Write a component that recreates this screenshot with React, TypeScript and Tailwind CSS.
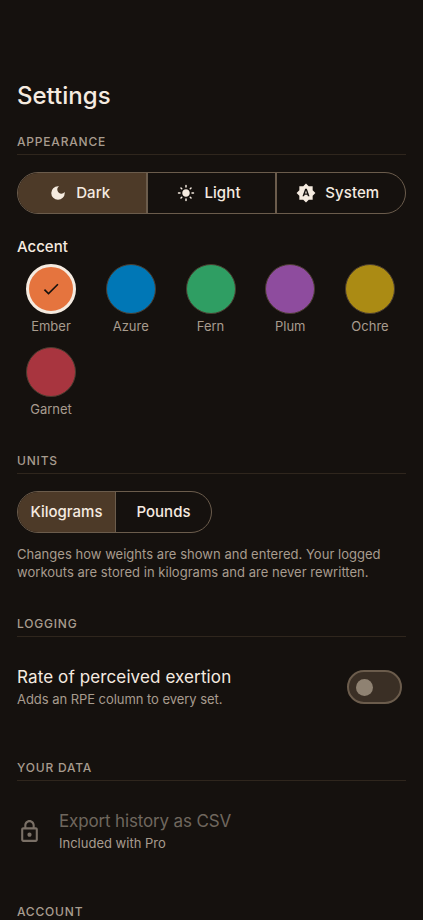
import React from "react";
import { MdBrightnessAuto, MdCheck, MdDarkMode, MdLightMode, MdOutlineLock } from "react-icons/md";

const swatches = [
  { name: "Ember", color: "bg-[#e5743e]", selected: true },
  { name: "Azure", color: "bg-[#0077b6]" },
  { name: "Fern", color: "bg-[#2f9e63]" },
  { name: "Plum", color: "bg-[#8e4c9e]" },
  { name: "Ochre", color: "bg-[#ab8b14]" },
  { name: "Garnet", color: "bg-[#a8353f]" },
];

const SectionTitle = ({ children }: { children: React.ReactNode }) => (
  <div className="border-b border-[#2f261d] pb-[3px] text-[12px] leading-[18px] font-medium tracking-[0.8px] text-[#a89c8e]">
    {children}
  </div>
);

export default function App() {
  return (
    <div className="h-[920px] overflow-hidden bg-[#15110e] px-[17px] pt-[80px] font-['Inter','Noto_Sans',sans-serif] text-[#f5ebe0]">
      <h1 className="text-[24px] leading-[32px] font-medium">Settings</h1>

      {/* appearance */}
      <section className="mt-[21px]">
        <SectionTitle>APPEARANCE</SectionTitle>
        <div className="mt-[17px] flex h-[42px] overflow-hidden rounded-full border border-[#6b5c4c] text-[15px] font-medium tracking-[0.1px]">
          <div className="flex w-[129.5px] shrink-0 items-center justify-center gap-[9px] border-r-2 border-[#6b5c4c] bg-[#4d3a28] pr-[4px]">
            <MdDarkMode size={18} />
            Dark
          </div>
          <div className="flex w-[129px] shrink-0 items-center justify-center gap-[9px] border-r-2 border-[#6b5c4c] pr-[4px]">
            <MdLightMode size={18} />
            Light
          </div>
          <div className="flex flex-1 items-center justify-center gap-[9px] pr-[6px]">
            <MdBrightnessAuto size={20} />
            System
          </div>
        </div>
      </section>

      {/* accent */}
      <section className="mt-[22px]">
        <div className="text-[15px] leading-[22px] font-medium">Accent</div>
        <div className="mt-[6px] flex flex-wrap gap-x-[11.75px] gap-y-[11px]">
          {swatches.map((s) => (
            <div key={s.name} className="flex w-[68px] flex-col items-center">
              {s.selected ? (
                <div className={`flex h-[50px] w-[50px] items-center justify-center rounded-full border-[3px] border-[#f5ebe0] ${s.color}`}>
                  <MdCheck size={20} className="text-[#15110e]" />
                </div>
              ) : (
                <div className={`h-[50px] w-[50px] rounded-full border border-[#4a3d30] ${s.color}`} />
              )}
              <span className="mt-[2px] text-[13px] leading-[20px] text-[#a89c8e]">{s.name}</span>
            </div>
          ))}
        </div>
      </section>

      {/* units */}
      <section className="mt-[33px]">
        <SectionTitle>UNITS</SectionTitle>
        <div className="mt-[17px] flex h-[42px] w-[195px] overflow-hidden rounded-full border border-[#6b5c4c] text-[15px] font-medium">
          <div className="flex w-[98px] items-center justify-center border-r border-[#6b5c4c] bg-[#4d3a28]">Kilograms</div>
          <div className="flex flex-1 items-center justify-center">Pounds</div>
        </div>
        <p className="mt-[12px] text-[13px] leading-[18px] tracking-[0.03px] text-[#a89c8e]">
          Changes how weights are shown and entered. Your logged workouts are stored in kilograms and are never rewritten.
        </p>
      </section>

      {/* logging */}
      <section className="mt-[34px]">
        <SectionTitle>LOGGING</SectionTitle>
        <div className="mt-[28px] flex items-center justify-between pr-[4px]">
          <div>
            <div className="text-[17px] leading-[24px] tracking-[0.12px]">Rate of perceived exertion</div>
            <div className="text-[13px] leading-[20px] tracking-[-0.05px] text-[#a89c8e]">Adds an RPE column to every set.</div>
          </div>
          <div className="flex h-[34px] w-[55px] items-center rounded-full border-2 border-[#6b5c4c] bg-[#3a2f25] pl-[7px]">
            <div className="h-[17px] w-[17px] rounded-full bg-[#8f8272]" />
          </div>
        </div>
      </section>

      {/* your data */}
      <section className="mt-[50px]">
        <SectionTitle>YOUR DATA</SectionTitle>
        <div className="mt-[28px] flex items-center gap-[17px]">
          <MdOutlineLock size={25} className="text-[#7a7066]" />
          <div>
            <div className="text-[17px] leading-[24px] tracking-[-0.15px] text-[#6f675e]">Export history as CSV</div>
            <div className="text-[13px] leading-[20px] text-[#a89c8e]">Included with Pro</div>
          </div>
        </div>
      </section>

      <section className="mt-[50px]">
        <SectionTitle>ACCOUNT</SectionTitle>
      </section>
    </div>
  );
}
